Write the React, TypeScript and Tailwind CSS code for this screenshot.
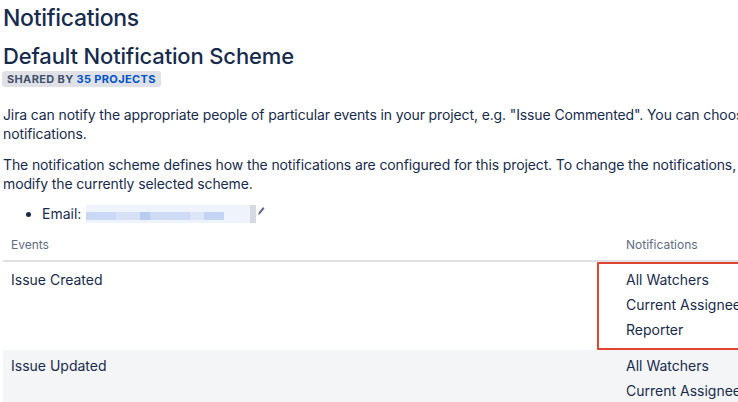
import React from "react";

const notifications = ["All Watchers", "Current Assignee", "Reporter"];

const Badge = () => (
  <span className="inline-flex items-center rounded-[3px] bg-[#dfe1e6] px-[5px] h-[16px] text-[11px] font-bold uppercase leading-none tracking-[0.35px] text-[#42526e]">
    Shared by&nbsp;<span className="text-[#0052cc]">35 projects</span>
  </span>
);

const App = () => {
  return (
    <div
      className="w-[738px] h-[402px] overflow-hidden bg-white text-[#172b4d]"
      style={{ fontFamily: "Inter, 'Noto Sans', sans-serif" }}
    >
      <div className="w-[900px] pl-[3px]">
        <h1 className="text-[23px] font-medium leading-[28px] tracking-[-0.3px] mt-[4px]">Notifications</h1>
        <h2 className="text-[22px] font-medium leading-[24px] tracking-[-0.15px] mt-[12px]">
          Default Notification Scheme
        </h2>
        <div className="flex mt-[3px] -ml-[1px]">
          <Badge />
        </div>

        <p className="mt-[18px] text-[14px] leading-[19px] tracking-[-0.12px]">
          <span className="whitespace-nowrap">
            Jira can notify the appropriate people of particular events in your project, e.g. "Issue Commented". You can choose specific people, groups, or roles to receive
          </span>
          <br />
          notifications.
        </p>
        <p className="mt-[12px] text-[14px] leading-[19px] tracking-[-0.12px]">
          <span className="whitespace-nowrap">
            The notification scheme defines how the notifications are configured for this project. To change the notifications, you can select a different scheme, or
          </span>
          <br />
          modify the currently selected scheme.
        </p>
        <ul className="mt-[11px] pl-[39px] list-disc text-[14px] leading-[20px]">
          <li>
            <span className="inline-flex items-center gap-[5px]">
              Email:
              <span className="inline-flex items-center h-[18px] w-[170px] bg-[#eef3fc]">
                <span className="h-[8px] w-[30px] bg-[#c9d8f5] mt-[4px]" />
                <span className="h-[8px] w-[24px] bg-[#d6e1f7] mt-[4px]" />
                <span className="h-[8px] w-[10px] bg-[#b8cbf1] mt-[4px]" />
                <span className="h-[8px] w-[40px] bg-[#cddbf6] mt-[4px]" />
                <span className="h-[8px] w-[14px] bg-[#dde6f8] mt-[4px]" />
                <span className="h-[8px] w-[20px] bg-[#c2d3f3] mt-[4px]" />
                <span className="h-[18px] w-[6px] bg-[#d7dae0] ml-auto" />
              </span>
              <svg width="8" height="10" viewBox="0 0 8 10" className="-ml-[4px] -mt-[6px]">
                <path d="M1 9 L2 6 L6 1 L7.5 2.5 L3.5 7.5 Z" fill="#5e6c84" />
              </svg>
            </span>
          </li>
        </ul>

        <div className="relative mt-[12px]">
          <div className="flex pt-[1px] pb-[7px] leading-[16px] border-b-2 border-[#dfe1e6] text-[12px] text-[#5e6c84]">
            <div className="w-[615px] pl-[8px]">Events</div>
            <div className="pl-[8px]">Notifications</div>
          </div>
          <div className="flex text-[14px] leading-[20px]">
            <div className="w-[615px] pl-[8px] pt-[8px]">Issue Created</div>
            <ul className="pl-[8px] pt-[8px] pb-[10px] flex flex-col gap-[5px]">
              {notifications.map((n) => (
                <li key={n}>{n}</li>
              ))}
            </ul>
          </div>
          <div className="flex bg-[#f4f5f7] text-[14px] leading-[20px]">
            <div className="w-[615px] pl-[8px] pt-[6px]">Issue Updated</div>
            <ul className="pl-[8px] pt-[6px] pb-[10px] flex flex-col gap-[5px]">
              {notifications.map((n) => (
                <li key={n}>{n}</li>
              ))}
            </ul>
          </div>
          <div className="absolute left-[594px] top-[26px] h-[88px] w-[200px] border-2 border-[#e0452f] rounded-[1px] pointer-events-none" />
        </div>
      </div>
    </div>
  );
};

export default App;
